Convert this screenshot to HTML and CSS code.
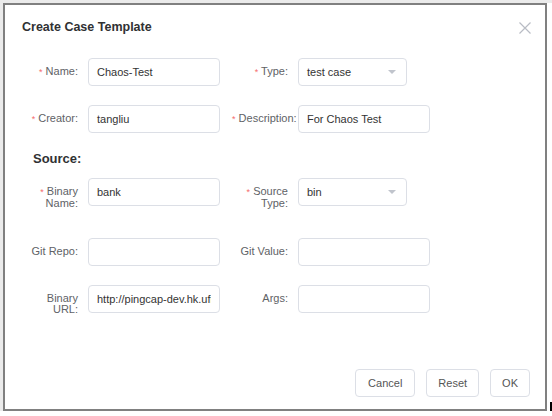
FILE: index.html
```html
<!DOCTYPE html>
<html>
<head>
<meta charset="utf-8">
<link rel="stylesheet" href="styles.css">
</head>
<body>
<div class="screen">
  <div class="dialog">
    <div class="header">
      <span class="title">Create Case Template</span>
      <span class="close"><svg width="12" height="12" viewBox="0 0 12 12"><path d="M0.5 0.5 L11.5 11.5 M11.5 0.5 L0.5 11.5" stroke="#b8bcc4" stroke-width="1.2" fill="none"/></svg></span>
    </div>
    <div class="body">
      <div class="row">
        <div class="item">
          <div class="label"><span class="req">*</span> Name:</div>
          <div class="input">Chaos-Test</div>
        </div>
        <div class="item">
          <div class="label"><span class="req">*</span> Type:</div>
          <div class="input select">test case<span class="arrow"></span></div>
        </div>
      </div>
      <div class="row">
        <div class="item">
          <div class="label"><span class="req">*</span> Creator:</div>
          <div class="input">tangliu</div>
        </div>
        <div class="item">
          <div class="label"><span class="req">*</span> Description:</div>
          <div class="input">For Chaos Test</div>
        </div>
      </div>
      <div class="section">Source:</div>
      <div class="row row-tall">
        <div class="item">
          <div class="label"><span class="req">*</span> Binary<br>Name:</div>
          <div class="input">bank</div>
        </div>
        <div class="item">
          <div class="label"><span class="req">*</span> Source<br>Type:</div>
          <div class="input select">bin<span class="arrow"></span></div>
        </div>
      </div>
      <div class="row">
        <div class="item">
          <div class="label">Git Repo:</div>
          <div class="input"></div>
        </div>
        <div class="item">
          <div class="label">Git Value:</div>
          <div class="input"></div>
        </div>
      </div>
      <div class="row">
        <div class="item">
          <div class="label">Binary<br>URL:</div>
          <div class="input"><span class="clip">http://pingcap-dev.hk.ufile.ucloud.cn/bank</span></div>
        </div>
        <div class="item">
          <div class="label">Args:</div>
          <div class="input"></div>
        </div>
      </div>
    </div>
    <div class="footer">
      <button class="btn btn-wide">Cancel</button>
      <button class="btn">Reset</button>
      <button class="btn">OK</button>
    </div>
  </div>
  <div class="cursor"></div>
</div>
</body>
</html>
```
FILE: styles.css
```css
html, body {
  margin: 0;
  padding: 0;
  background: #ffffff;
}
body {
  font-family: "Liberation Sans", Arial, sans-serif;
  width: 552px;
  height: 416px;
  overflow: hidden;
}
.screen {
  display: flex;
  align-items: flex-end;
  gap: 3px;
  width: 549px;
  height: 408px;
  border-top: 3px solid #ebebeb;
  border-left: 3px solid #ebebeb;
}
.dialog {
  box-sizing: border-box;
  width: 544px;
  height: 408px;
  border: 2px solid #808080;
  background: #fff;
  display: flex;
  flex-direction: column;
}
.header {
  display: flex;
  justify-content: space-between;
  align-items: center;
  padding: 14px 14px 0 17px;
  height: 16px;
}
.title {
  font-size: 12.5px;
  font-weight: bold;
  color: #303133;
  line-height: 16px;
}
.close {
  display: flex;
  width: 12px;
  height: 12px;
  margin-top: 1px;
}
.body {
  padding: 23px 0 0 17px;
}
.row {
  display: flex;
  gap: 12px;
  margin-bottom: 19px;
}
.row-tall {
  margin-bottom: 29px;
}
.item {
  display: flex;
}
.label {
  box-sizing: border-box;
  width: 66px;
  padding: 8px 10px 0 0;
  font-size: 11px;
  line-height: 11px;
  color: #606266;
  text-align: right;
  white-space: nowrap;
}
.req {
  color: #f56c6c;
  font-size: 9px;
}
.input {
  box-sizing: border-box;
  width: 132px;
  height: 28px;
  border: 1px solid #dcdfe6;
  border-radius: 4px;
  padding: 0 8px;
  font-size: 11px;
  line-height: 26px;
  color: #333;
  white-space: nowrap;
  overflow: hidden;
  position: relative;
}
.clip {
  display: block;
  overflow: hidden;
  white-space: nowrap;
}
.select {
  width: 109px;
}
.arrow {
  position: absolute;
  right: 10px;
  top: 11px;
  width: 0;
  height: 0;
  border-left: 4px solid transparent;
  border-right: 4px solid transparent;
  border-top: 4px solid #c0c4cc;
}
.section {
  font-size: 13px;
  font-weight: bold;
  color: #303133;
  line-height: 14px;
  padding-left: 11px;
  margin-bottom: 12px;
}
.footer {
  margin-top: auto;
  display: flex;
  justify-content: flex-end;
  gap: 11px;
  padding: 0 15px 12px 0;
}
.btn {
  box-sizing: border-box;
  height: 28px;
  padding: 0 11px;
  border: 1px solid #dcdfe6;
  border-radius: 4px;
  background: #fff;
  font-family: "Liberation Sans", Arial, sans-serif;
  font-size: 11px;
  color: #555;
}
.btn-wide {
  padding: 0 12px;
}
.cursor {
  width: 2px;
  height: 9px;
  background: #000;
}
```
